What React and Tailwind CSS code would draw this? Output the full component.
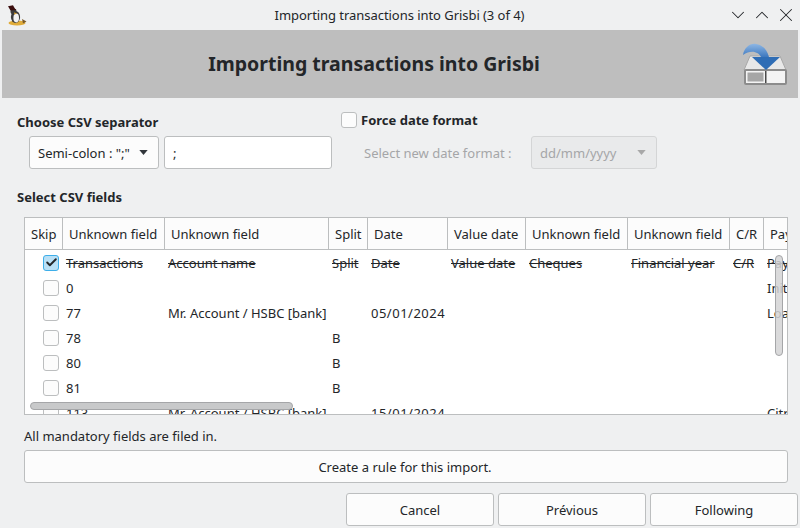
import { ChevronDown, ChevronUp, X, Check } from "lucide-react";

const columns = [
  { label: "Skip", width: "w-[38px]" },
  { label: "Unknown field", width: "w-[102px]" },
  { label: "Unknown field", width: "w-[164px]" },
  { label: "Split", width: "w-[39px]" },
  { label: "Date", width: "w-[80px]" },
  { label: "Value date", width: "w-[78px]" },
  { label: "Unknown field", width: "w-[102px]" },
  { label: "Unknown field", width: "w-[102px]" },
  { label: "C/R", width: "w-[34px]" },
  { label: "Payee", width: "w-[60px]" },
];

const rows = [
  { checked: true, cells: ["Transactions", "Account name", "Split", "Date", "Value date", "Cheques", "Financial year", "C/R", "Payee"] },
  { cells: ["0", "", "", "", "", "", "", "", "Initial"] },
  { cells: ["77", "Mr. Account / HSBC [bank]", "", "05/01/2024", "", "", "", "", "Loan"] },
  { cells: ["78", "", "B", "", "", "", "", "", ""] },
  { cells: ["80", "", "B", "", "", "", "", "", ""] },
  { cells: ["81", "", "B", "", "", "", "", "", ""] },
  { cells: ["113", "Mr. Account / HSBC [bank]", "", "15/01/2024", "", "", "", "", "Citroen"] },
];

function GrisbiLogo() {
  return (
    <svg viewBox="0 0 24 24" className="w-6 h-6 shrink-0">
      <ellipse cx="13" cy="20" rx="8.5" ry="2.6" fill="#e0ac3a" />
      <path d="M18 16l4.5 2.5-3.5 2z" fill="#7a5a2a" />
      <ellipse cx="11.5" cy="14" rx="4.6" ry="6" fill="#3c3c3c" />
      <ellipse cx="12.2" cy="15" rx="2.8" ry="4.4" fill="#f2f2f2" />
      <circle cx="9.5" cy="8.5" r="3" fill="#3c3c3c" />
      <path d="M4 3.2l5-1 2 3.5 1.5 1.2-6 .6z" fill="#3a0d0d" />
      <path d="M10 9.5l3 .7-2.4 1.2z" fill="#e8a92c" />
    </svg>
  );
}

function ImportIcon() {
  return (
    <svg viewBox="0 0 46 44" className="w-[46px] h-[44px] shrink-0">
      <defs>
        <linearGradient id="arrowTail" x1="0" y1="0" x2="0" y2="1">
          <stop offset="0" stopColor="#8db6e4" />
          <stop offset="1" stopColor="#3d78bf" />
        </linearGradient>
      </defs>
      <path d="M2 28L8 14h30l6 14z" fill="#e8e8e8" stroke="#a8a8a8" />
      <rect x="2" y="27" width="43" height="16" rx="2" fill="#8c8c8c" />
      <rect x="4" y="29" width="39" height="12" fill="#f4f4f4" />
      <rect x="5.5" y="30.5" width="16" height="9" fill="#a6a6a6" />
      <rect x="23" y="29" width="1.5" height="12" fill="#4a4a4a" />
      <path d="M1 13C2 6 8 1 14 2c6 1 11 5 13 13h-8C17 10 9 7 1 13z" fill="url(#arrowTail)" />
      <path d="M10 15h28L24 28z" fill="#2f6db5" />
    </svg>
  );
}

function CaretDown({ muted }) {
  return (
    <svg viewBox="0 0 10 6" className="w-[9px] h-[5px] shrink-0">
      <path d="M0 0h10L5 6z" fill={muted ? "#a8a8a8" : "#31363b"} />
    </svg>
  );
}

function Checkbox({ checked }) {
  if (checked) {
    return (
      <div className="w-4 h-4 rounded-[3px] border border-[#3daee9] bg-[#b9e0f6] flex items-center justify-center">
        <Check size={13} strokeWidth={3.5} className="text-[#232629]" />
      </div>
    );
  }
  return <div className="w-4 h-4 rounded-[3px] border border-[#bcbebf] bg-[#fcfcfc]" />;
}

function Button({ children, className = "" }) {
  return (
    <div className={`h-[33px] flex items-center justify-center rounded-[3px] border border-[#bcbebf] bg-[#fcfcfc] ${className}`}>
      {children}
    </div>
  );
}

export default function App() {
  return (
    <div className="w-[800px] h-[528px] overflow-hidden bg-[#eff0f1] text-[13px] leading-[18px] text-[#232629] font-['Noto_Sans',sans-serif]">
      {/* Title bar */}
      <div className="h-[30px] flex items-center pl-1 pr-[3px]">
        <GrisbiLogo />
        <div className="flex-1 text-center pl-[44px] tracking-[-0.05px]">Importing transactions into Grisbi (3 of 4)</div>
        <div className="flex items-center gap-[2px] text-[#232629]">
          <ChevronDown size={22} strokeWidth={1.1} />
          <ChevronUp size={22} strokeWidth={1.1} />
          <X size={22} strokeWidth={1.1} />
        </div>
      </div>

      {/* Banner */}
      <div className="mx-[2px] h-[68px] bg-[#bebebe] flex items-center pr-[10px]">
        <div className="flex-1 text-center text-[19.5px] font-bold pl-[4px] pb-[1px]">Importing transactions into Grisbi</div>
        <ImportIcon />
      </div>

      {/* Separator + date format */}
      <div className="flex h-[60px] mt-[15px] pl-[17px]">
        <div className="w-[324px]">
          <div className="font-bold h-[18px]">Choose CSV separator</div>
          <div className="flex gap-[5px] pl-[12px] mt-[5px]">
            <div className="w-[130px] h-[33px] flex items-center justify-between pl-[8px] pr-[10px] rounded-[3px] border border-[#bcbebf] bg-[#fcfcfc]">
              <span>Semi-colon : ";"</span>
              <CaretDown />
            </div>
            <div className="w-[168px] h-[33px] flex items-center pl-[8px] rounded-[3px] border border-[#bcbebf] bg-white">;</div>
          </div>
        </div>
        <div className="-mt-[2px]">
          <div className="flex items-center gap-[4px] h-[18px]">
            <Checkbox />
            <span className="font-bold">Force date format</span>
          </div>
          <div className="flex items-center mt-[7px] pl-[23px] text-[#a5a6a8]">
            <span className="w-[167px]">Select new date format :</span>
            <div className="w-[126px] h-[33px] flex items-center justify-between pl-[8px] pr-[10px] rounded-[3px] border border-[#d4d5d6] bg-[#e9eaeb]">
              <span>dd/mm/yyyy</span>
              <CaretDown muted />
            </div>
          </div>
        </div>
      </div>

      {/* CSV fields */}
      <div className="pl-[17px] mt-[15px] font-bold h-[18px]">Select CSV fields</div>
      <div className="relative mx-[24px] w-[764px] h-[198px] mt-[11px] overflow-hidden border border-[#bcbebf] bg-white">
        <div className="flex h-[32px] border-b border-[#bcbebf] bg-[#fcfcfc] w-max">
          {columns.map((col, i) => (
            <div key={i} className={`${col.width} shrink-0 flex items-center pl-[6px] border-r border-[#bcbebf] whitespace-nowrap overflow-hidden`}>
              {col.label}
            </div>
          ))}
        </div>
        <div>
          {rows.map((row, i) => (
            <div key={i} className="flex h-[25px] items-center w-max">
              <div className="w-[38px] shrink-0 flex pl-[18px]">
                <Checkbox checked={row.checked} />
              </div>
              {row.cells.map((cell, j) => (
                <div
                  key={j}
                  className={`${columns[j + 1].width} shrink-0 pl-[3px] whitespace-nowrap ${row.checked ? "line-through" : ""} ${cell.includes("/2024") ? "tracking-[0.5px]" : ""}`}
                >
                  {cell}
                </div>
              ))}
            </div>
          ))}
        </div>
        {/* Overlay scrollbars */}
        <div className="absolute left-[5px] top-[184px] w-[263px] h-2 rounded-full border border-[#a5a6a8] bg-[#c8c9ca]" />
        <div className="absolute left-[750px] top-[37px] w-2 h-[101px] rounded-full border border-[#a5a6a8] bg-[#d3d4d5]/85" />
      </div>

      <div className="pl-[24px] mt-[12px] h-[18px]">All mandatory fields are filed in.</div>
      <Button className="mx-[24px] w-[764px] mt-[5px]">
        <span className="pr-[2px]">Create a rule for this import.</span>
      </Button>
      <div className="flex justify-end gap-[4px] pr-[2px] mt-[10px]">
        <Button className="w-[148px]">Cancel</Button>
        <Button className="w-[148px]">Prévious</Button>
        <Button className="w-[148px]">Following</Button>
      </div>
    </div>
  );
}
